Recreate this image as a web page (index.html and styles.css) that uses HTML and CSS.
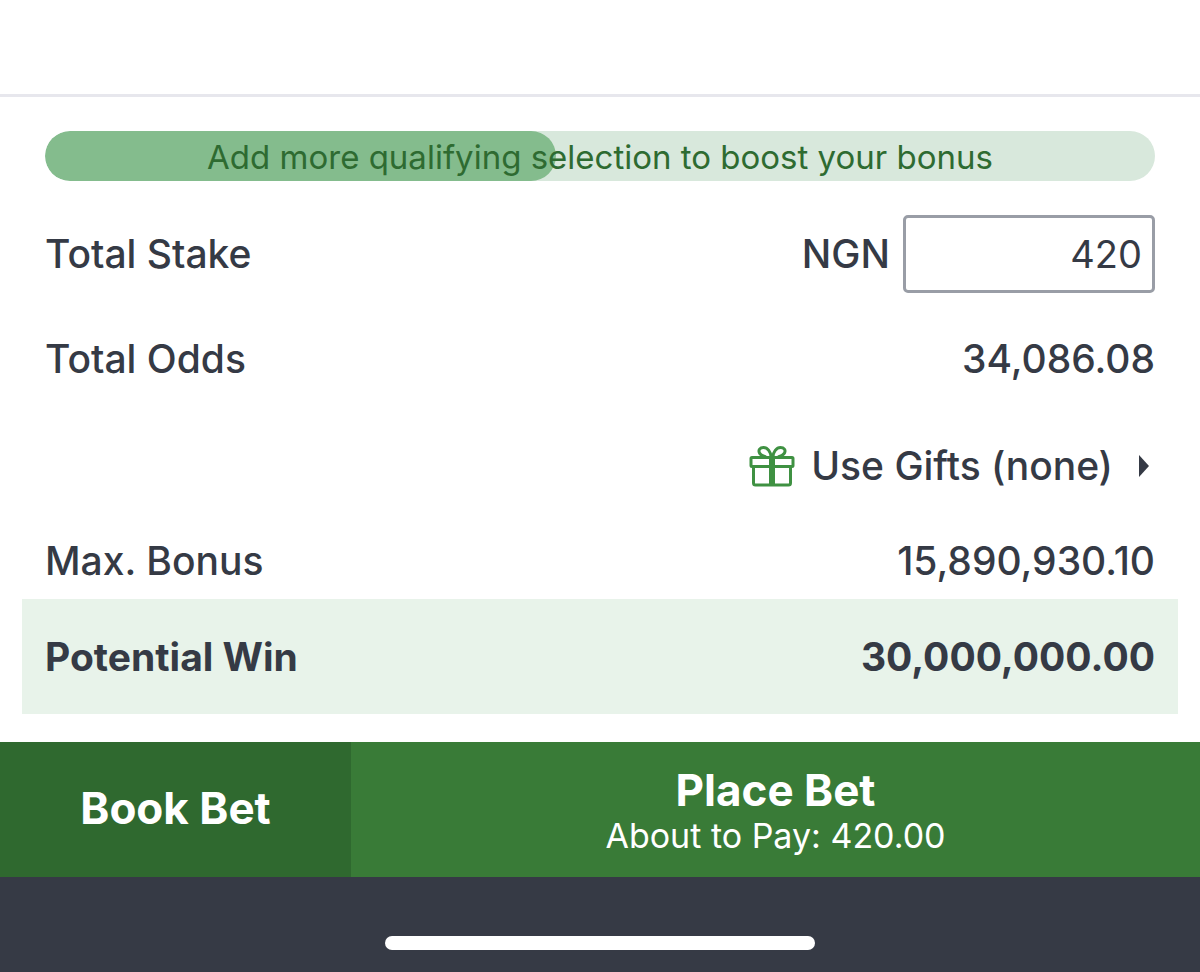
FILE: index.html
```html
<!DOCTYPE html>
<html lang="en">
<head>
<meta charset="utf-8">
<meta name="viewport" content="width=device-width, initial-scale=1">
<title>Betslip</title>
<link rel="stylesheet" href="styles.css">
</head>
<body>
<main class="betslip">
  <div class="top-space"></div>
  <section class="summary">
    <div class="boost"><div class="boost-fill"></div><span class="boost-text">Add more qualifying selection to boost your bonus</span></div>
    <div class="row row-stake">
      <label for="stake">Total Stake</label>
      <div class="stake"><span>NGN</span><input class="stake-input" id="stake" type="text" inputmode="decimal" value="420"></div>
    </div>
    <div class="row row-odds"><span>Total Odds</span><span>34,086.08</span></div>
    <div class="row row-gifts">
      <button class="gifts" type="button">
        <svg class="gift-icon" viewBox="0 0 46 42" fill="none" stroke="#3f9142" stroke-width="3" stroke-linejoin="round" aria-hidden="true">
          <rect x="2" y="12.500" width="42" height="9" rx="1"/>
          <path d="M4.500 21V38Q4.500 40 6.500 40H39.500Q41.500 40 41.500 38V21"/>
          <path d="M22 12C22 7 18.500 2.500 14.500 2.500C11 2.500 9 5 10.500 8C11.500 10 14 11 17 12M24 12C24 7 27.500 2.500 31.500 2.500C35 2.500 37 5 35.500 8C34.500 10 32 11 29 12"/>
          <path d="M23 11V40" stroke-width="6"/>
        </svg>
        <span>Use Gifts (none)</span>
        <svg class="arrow" viewBox="0 0 10 22" aria-hidden="true"><path d="M0 0L10 11L0 22Z" fill="#353a45"/></svg>
      </button>
    </div>
    <div class="row row-bonus"><span>Max. Bonus</span><span>15,890,930.10</span></div>
    <div class="row row-win"><span>Potential Win</span><span>30,000,000.00</span></div>
  </section>
  <div class="actions">
    <button class="book" type="button">Book Bet</button>
    <button class="place" type="button"><span class="place-title">Place Bet</span><span class="place-note">About to Pay: 420.00</span></button>
  </div>
  <footer class="home-area"><div class="home-bar"></div></footer>
</main>
</body>
</html>
```
FILE: styles.css
```css
* { box-sizing: border-box; }
body { margin: 0; background: #fff; color: #353a45; font-family: Inter, "Liberation Sans", sans-serif; }
button, input { font: inherit; color: inherit; }
button { border: 0; padding: 0; background: none; cursor: pointer; }
.betslip { display: flex; flex-direction: column; min-height: 100vh; }
.top-space { height: 97px; border-bottom: 3px solid #e7e7ed; }
.summary { padding: 34px 22px 28px; font-size: 39px; font-weight: 500; line-height: 48px; }
.boost { position: relative; height: 50px; margin: 0 23px; border-radius: 25px; background: #d8e8dc; overflow: hidden; text-align: center; }
.boost-fill { position: absolute; inset: 0 auto 0 0; width: 46%; border-radius: 25px; background: #84bc8d; }
.boost-text { position: relative; color: #2e6b31; font-size: 33px; font-weight: 400; line-height: 50px; }
.row { display: flex; align-items: center; justify-content: space-between; padding: 0 23px; }
.row-stake { height: 78px; margin-top: 34px; }
.stake { display: flex; align-items: center; gap: 13px; }
.stake-input { width: 252px; height: 78px; padding: 0 10px; border: 3px solid #999da6; border-radius: 5px; background: #fff; text-align: right; font-size: 38px; font-weight: 400; }
.row-odds { margin-top: 42px; }
.row-gifts { justify-content: flex-end; margin-top: 59px; }
.gifts { display: flex; align-items: center; }
.gift-icon { width: 46px; height: 42px; margin-right: 16px; }
.arrow { width: 10px; height: 22px; margin: 0 6px 0 26px; }
.row-bonus { margin-top: 47px; }
.row-win { height: 115px; margin-top: 14px; background: #e8f3ea; font-weight: 700; }
.actions { display: flex; min-height: 135px; color: #fff; }
.book { flex: 0 0 351px; padding-bottom: 4px; background: #2f692f; font-size: 44px; font-weight: 700; }
.place { flex: 1; display: flex; flex-direction: column; align-items: center; justify-content: center; background: #397b37; }
.place-title { font-size: 44px; font-weight: 700; line-height: 52px; }
.place-note { font-size: 34px; font-weight: 400; line-height: 40px; }
.home-area { flex: 1; display: flex; justify-content: center; align-items: flex-end; padding: 59px 4px 22px; background: #363a45; }
.home-bar { width: 36%; height: 14px; border-radius: 7px; background: #fff; }
```
